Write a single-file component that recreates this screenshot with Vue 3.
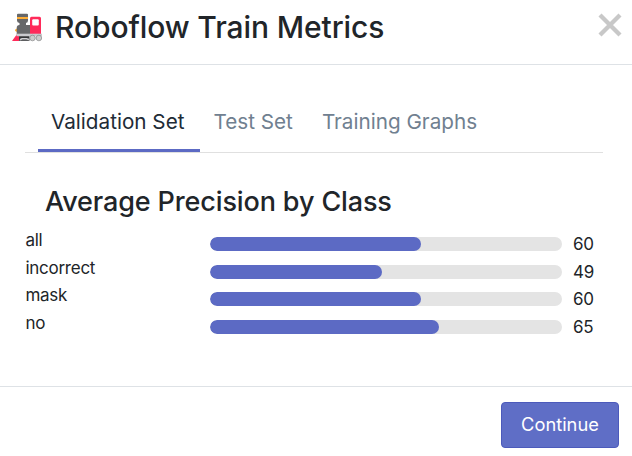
<script setup>
const tabs = ['Validation Set', 'Test Set', 'Training Graphs']
const rows = [
  { name: 'all', value: 60 },
  { name: 'incorrect', value: 49 },
  { name: 'mask', value: 60 },
  { name: 'no', value: 65 },
]
</script>

<template>
  <div class="modal">
    <header class="head">
      <svg class="train" width="30" height="30" viewBox="0 0 30 30">
        <path d="M0 28 L4.7 21.5 H7 V28Z" fill="#ff2a5a" />
        <path d="M5 15.5 Q3 16 3 17.3 Q3 18.5 5 19Z" fill="#ffae35" />
        <path d="M5 1.8 Q5 .8 6 .8 H15 Q16 .8 16 1.8 V7.5 Q16 9.5 14 10 V12 H18 V21.3 H4.7 V15 Q4.7 12 7.5 12 V10 Q5 9.5 5 7.5Z" fill="#666769" />
        <rect x="5" y="4" width="11" height="2" fill="#ffae35" />
        <path d="M19.5 3.8 H27.5 Q29 3.8 29 5.3 V21.3 H18 V5.3 Q18 3.8 19.5 3.8Z" fill="#ff2a5a" />
        <rect x="20.2" y="6.2" width="6.6" height="6.4" rx="1" fill="#fff" />
        <path d="M4.5 20.7 H30 V23.2 H4.5Z" fill="#c9c9cd" />
        <path d="M7 23.2 H17.5 V27.8 H7Z" fill="#343538" />
        <path d="M8 26.8 L10 25.8 H14.5 L17 26.6" fill="none" stroke="#d1d1d4" stroke-width="1.6" />
        <circle cx="20.5" cy="25" r="2.8" fill="#ccc" stroke="#77787a" stroke-width=".6" />
        <circle cx="26.9" cy="25" r="2.8" fill="#ccc" stroke="#77787a" stroke-width=".6" />
      </svg>
      <h1>Roboflow Train Metrics</h1>
      <svg class="close" width="24" height="24" viewBox="0 0 24 24">
        <path d="M2 2 L22 22 M22 2 L2 22" stroke="#c8c8c8" stroke-width="4.3" fill="none" />
      </svg>
    </header>
    <main class="body">
      <nav class="tabs">
        <a v-for="(t, i) in tabs" :key="t" class="tab" :class="{ active: i === 0 }">{{ t }}</a>
      </nav>
      <h2>Average Precision by Class</h2>
      <div class="rows">
        <div v-for="r in rows" :key="r.name" class="row">
          <span class="name">{{ r.name }}</span>
          <div class="track"><div class="fill" :style="{ width: r.value + '%' }"></div></div>
          <span class="value">{{ r.value }}</span>
        </div>
      </div>
    </main>
    <footer class="foot"><button class="btn">Continue</button></footer>
  </div>
</template>

<style>
body { background: #fff; }
</style>
<style scoped>
.modal { width: 632px; height: 456px; display: flex; flex-direction: column; font-family: Inter, sans-serif; color: #212529; overflow: hidden; }
.modal * { box-sizing: border-box; }
.head { height: 65px; flex: none; display: flex; align-items: flex-start; border-bottom: 1px solid #dee2e6; padding: 0 10px 0 12px; }
.train { margin-top: 13px; flex: none; }
h1 { margin: 9px 0 0 13px; font-size: 30px; line-height: 36px; font-weight: 500; letter-spacing: -0.1px; white-space: nowrap; }
.close { margin: 13px 0 0 auto; flex: none; }
.body { height: 321px; flex: none; padding: 31px 29px 0 25px; }
.tabs { height: 57px; display: flex; padding-left: 13px; border-bottom: 1px solid #e0e0e0; }
.tab { height: 56px; padding: 11px 16px 0 13px; font-size: 20.7px; line-height: 30px; color: #708090; white-space: nowrap; border-bottom: 3px solid transparent; }
.tab.active { color: #212b36; border-bottom-color: #5c6ac4; }
h2 { margin: 32px 0 0 20px; font-size: 27px; line-height: 34px; font-weight: 500; letter-spacing: -0.13px; white-space: nowrap; }
.rows { margin-top: 11px; }
.row { height: 27.7px; display: grid; grid-template-columns: 185px 352px 1fr; }
.name { font-size: 17px; line-height: 21px; letter-spacing: -0.25px; padding-left: 0.4px; }
.track { height: 14px; margin-top: 7px; border-radius: 7px; background: #e4e4e4; overflow: hidden; }
.fill { height: 100%; border-radius: 7px; background: #5c6ac4; }
.value { margin: 4px 0 0 11px; font-size: 17px; line-height: 20px; letter-spacing: -0.2px; }
.foot { height: 70px; flex: none; border-top: 1px solid #dee2e6; padding: 15px 13px 0; display: flex; justify-content: flex-end; align-items: flex-start; }
.btn { width: 118px; height: 46px; padding: 0 0 2px; border: 1px solid #4c5abb; border-radius: 4px; background: #5f6ec6; color: #fff; font-family: inherit; font-size: 18.3px; line-height: 24px; }
</style>
